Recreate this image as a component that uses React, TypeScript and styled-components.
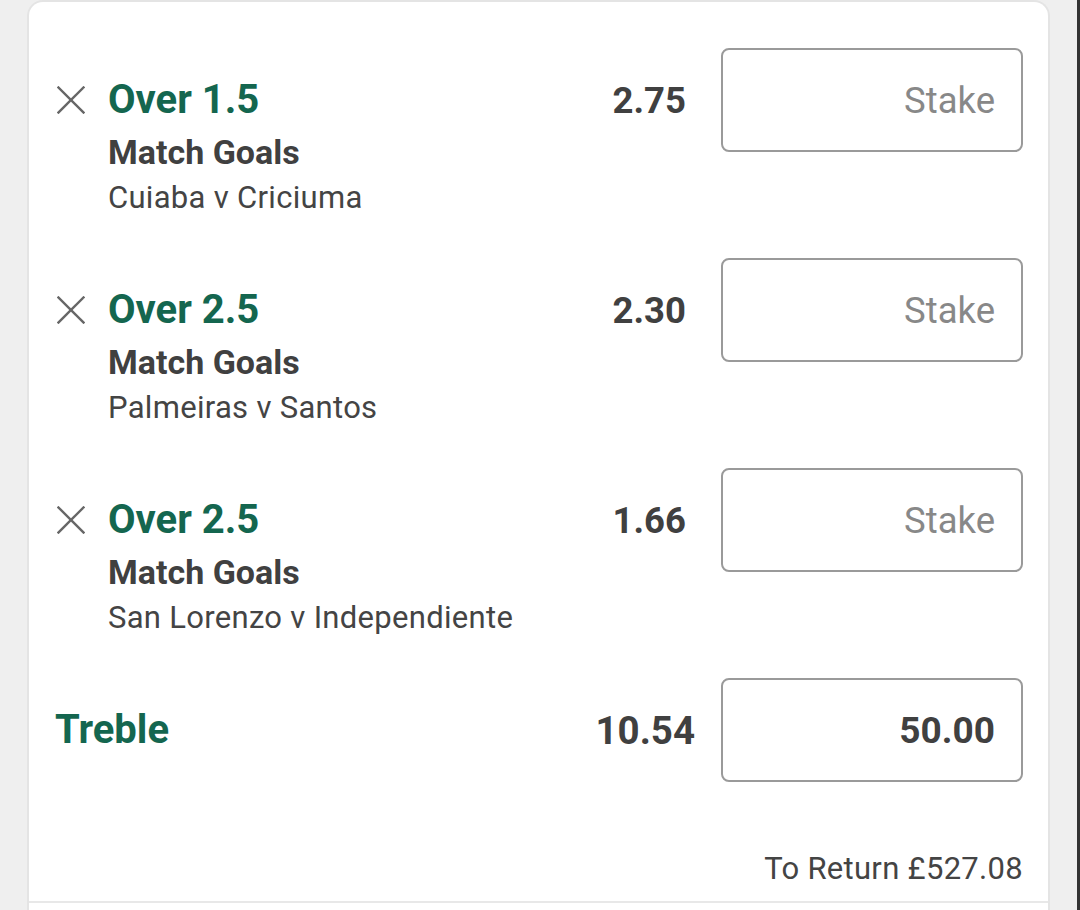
import styled, { createGlobalStyle } from 'styled-components';

const GlobalStyle = createGlobalStyle`
  html, body {
    margin: 0;
    padding: 0;
    background: #efefef;
  }
  body {
    font-family: Roboto, "Liberation Sans", Arial, sans-serif;
    color: #404040;
  }
  * {
    box-sizing: border-box;
  }
`;

const Page = styled.div`
  min-height: 910px;
  padding: 0 27px 0 27px;
  border-right: 3px solid #333;
  overflow: hidden;
`;

const Card = styled.div`
  background: #fff;
  border: 2px solid #e4e4e4;
  border-bottom: none;
  border-radius: 16px 16px 0 0;
  padding: 46px 25px 0 28px;
  min-height: 930px;
`;

const List = styled.div`
  display: flex;
  flex-direction: column;
  gap: 38px;
`;

const Row = styled.div`
  display: flex;
  align-items: flex-start;
`;

const Info = styled.div`
  flex: 1;
  padding-top: 28px;
`;

const Head = styled.div`
  display: flex;
  align-items: center;
  gap: 23px;
`;

const Remove = styled.button`
  width: 28px;
  height: 28px;
  padding: 0;
  border: none;
  background: none;
  display: flex;

  & svg {
    width: 100%;
    height: 100%;
  }
`;

const Title = styled.div`
  font-size: 40px;
  line-height: 48px;
  font-weight: 700;
  color: #14664f;
`;

const Details = styled.div`
  padding-left: 51px;
`;

const Market = styled.div`
  margin-top: 4px;
  font-size: 34px;
  line-height: 48px;
  font-weight: 700;
  color: #404040;
`;

const Event = styled.div`
  font-size: 31px;
  line-height: 44px;
  letter-spacing: 0.3px;
  color: #444;
`;

type PriceProps = {
  $gap?: number;
};
const Price = styled.div<PriceProps>`
  display: flex;
  align-items: center;
  height: 104px;
  gap: ${(p) => p.$gap ?? 35}px;
`;

type OddsProps = {
  $large?: boolean;
};
const Odds = styled.div<OddsProps>`
  font-size: ${(p) => (p.$large ? 38.5 : 36.5)}px;
  font-weight: 700;
  color: #404040;
`;

type StakeProps = {
  $filled?: boolean;
};
const Stake = styled.input<StakeProps>`
  width: 302px;
  height: 104px;
  border: 2px solid #9a9a9a;
  border-radius: 8px;
  padding: 0 26px 0 16px;
  text-align: right;
  font-family: Roboto, "Liberation Sans", Arial, sans-serif;
  font-size: ${(p) => (p.$filled ? 37 : 36.5)}px;
  font-weight: ${(p) => (p.$filled ? 700 : 400)};
  color: #404040;
  background: #fff;
  outline: none;

  &::placeholder {
    color: #888;
  }
`;

const Multiple = styled.div`
  display: flex;
  align-items: center;
  margin-top: 38px;
`;

const MultipleName = styled(Title)`
  flex: 1;
  margin-left: -2px;
`;

const Summary = styled.div`
  margin-top: 67px;
  padding-bottom: 12px;
  text-align: right;
  font-size: 31px;
  line-height: 40px;
  letter-spacing: 0.3px;
  color: #444;
`;

const Divider = styled.div`
  height: 2px;
  margin: 0 -25px 0 -28px;
  background: #e8e8e8;
`;

const CloseIcon = () => (
  <svg viewBox="0 0 28 28" fill="none" stroke="#666" strokeWidth="2.4" strokeLinecap="square">
    <line x1="1.5" y1="1.5" x2="26.5" y2="26.5" />
    <line x1="26.5" y1="1.5" x2="1.5" y2="26.5" />
  </svg>
);

const selections = [
  { pick: 'Over 1.5', market: 'Match Goals', event: 'Cuiaba v Criciuma', odds: '2.75' },
  { pick: 'Over 2.5', market: 'Match Goals', event: 'Palmeiras v Santos', odds: '2.30' },
  { pick: 'Over 2.5', market: 'Match Goals', event: 'San Lorenzo v Independiente', odds: '1.66' },
];

export default function App() {
  return (
    <>
      <GlobalStyle />
      <Page>
        <Card>
          <List>
            {selections.map((s, i) => (
              <Row key={i}>
                <Info>
                  <Head>
                    <Remove aria-label="Remove">
                      <CloseIcon />
                    </Remove>
                    <Title>{s.pick}</Title>
                  </Head>
                  <Details>
                    <Market>{s.market}</Market>
                    <Event>{s.event}</Event>
                  </Details>
                </Info>
                <Price>
                  <Odds>{s.odds}</Odds>
                  <Stake placeholder="Stake" />
                </Price>
              </Row>
            ))}
          </List>
          <Multiple>
            <MultipleName>Treble</MultipleName>
            <Price $gap={26}>
              <Odds $large>10.54</Odds>
              <Stake $filled defaultValue="50.00" />
            </Price>
          </Multiple>
          <Summary>To Return £527.08</Summary>
          <Divider />
        </Card>
      </Page>
    </>
  );
}
